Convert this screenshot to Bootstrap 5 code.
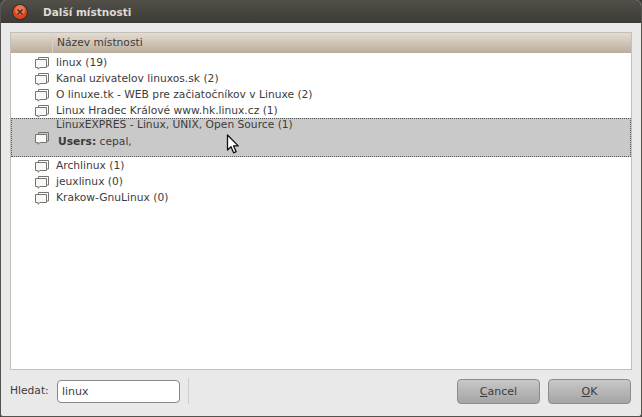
<!DOCTYPE html>
<html lang="cs">
<head>
  <meta charset="UTF-8">
  <title>Další místnosti</title>
  <link href="https://cdn.jsdelivr.net/npm/bootstrap@5.3.0/dist/css/bootstrap.min.css" rel="stylesheet">
  <style>
    html, body { height: 417px; overflow: hidden; background: #3c3b37; }
    body { font-family: "DejaVu Sans", sans-serif; font-size: 10.7px; color: #3c3c3c; line-height: 16px; }
    .dlg { width: 642px; height: 417px; position: relative; background: #e9e9e9; border-radius: 6px 6px 3px 3px; border: solid #55534d; border-width: 0 1px 1px 1px; overflow: hidden; }
    .titlebar { height: 23px; background: linear-gradient(#524f48, #3c3b37); color: #dfdbd2; font-weight: 700; font-size: 10.5px; margin: 0 -1px; padding-left: 12px; gap: 15px; }
    .panel { margin: 9px 9px 0 9px; height: 338px; background: #fff; border: 1px solid #c3c0ba; }
    .head-row { height: 20px; background: linear-gradient(#e4dcd0, #b9ac9b); color: #3c3c3c; }
    .head-blank { width: 42px; border-right: 1px solid #d6cec2; }
    .head-name { padding-left: 4px; }
    .room { height: 16px; padding: 1px 0 0 23px; gap: 6px; color: #3c3c3c; }
    .first { margin-top: 1px; }
    .room-sel { height: 39px; background: #c9c9c9; border: 1px dotted #555; padding-left: 22px; gap: 6px; }
    .room-text { align-self: flex-start; margin-top: -2px; }
    .users { margin: 1px 0 0 2px; }
    .chat { flex: 0 0 auto; }
    .foot { padding: 8px 10px 0 9px; }
    .foot-label { width: 47px; }
    .search { width: 123px; height: 23px; border: 1px solid #8a8780; border-radius: 4px; padding: 0 4px; font-size: 11px; color: #3c3c3c; background: #fff; font-family: inherit; outline: 0; }
    .sep { width: 1px; height: 26px; background: #cfcdc9; margin-left: 8px; }
    .gtk-btn { width: 83px; height: 25px; padding: 0; font-size: 11px; line-height: 1; color: #3c3c3c; border: 1px solid #8e8c87; border-radius: 4px; background: linear-gradient(#c8c8c8, #a4a4a4); font-family: inherit; }
    .pointer { position: absolute; left: 225px; top: 134px; }
  </style>
</head>
<body>
  <div class="dlg d-flex flex-column">
    <div class="titlebar d-flex align-items-center">
      <svg class="chat" width="16" height="16" viewBox="0 0 16 16"><circle cx="8" cy="8" r="7.5" fill="#d9481f" stroke="#2f2d29"/><circle cx="8" cy="6" r="5" fill="#f08a62" opacity=".7"/><path d="M5.500 5.500l5 5M10.500 5.500l-5 5" stroke="#4a2a20" stroke-width="1.4"/></svg>
      <span>Další místnosti</span>
    </div>

    <div class="panel">
      <div class="head-row d-flex align-items-center">
        <div class="head-blank h-100"></div>
        <div class="head-name">Název místnosti</div>
      </div>
      <div id="rows"></div>
    </div>

    <div class="foot d-flex align-items-center">
      <label class="foot-label" for="q">Hledat:</label>
      <input class="search" id="q" type="text" value="linux">
      <div class="sep"></div>
      <div class="d-flex gap-2 ms-auto">
        <button class="btn gtk-btn" type="button"><u>C</u>ancel</button>
        <button class="btn gtk-btn" type="button"><u>O</u>K</button>
      </div>
    </div>

    <svg class="pointer" width="14" height="21" viewBox="0 0 14 21"><path d="M1.500 1v15l3.500-3.200 2.600 6 2.600-1.100-2.600-5.800h4.600z" fill="#fff" stroke="#111" stroke-width="1.300" stroke-linejoin="round"/></svg>
  </div>

  <script src="https://cdn.jsdelivr.net/npm/bootstrap@5.3.0/dist/js/bootstrap.bundle.min.js"></script>
  <script>
    const chatIcon = `<svg class="chat" width="16" height="14" viewBox="0 0 16 14" fill="none" stroke="#77756f"><path d="M4.500 3V1.500h10V10h-1.500"/><path d="M1.500 3.500h11v8H6l-2 1.800v-1.800H1.500z" fill="#f8f8f6"/></svg>`;
    const before = ['linux (19)', 'Kanal uzivatelov linuxos.sk (2)', 'O linuxe.tk - WEB pre začiatočníkov v Linuxe (2)', 'Linux Hradec Králové www.hk.linux.cz (1)'];
    const after = ['Archlinux (1)', 'jeuxlinux (0)', 'Krakow-GnuLinux (0)'];
    const row = (t, i) => `<div class="room d-flex align-items-center${i === 0 ? ' first' : ''}">${chatIcon}<span>${t}</span></div>`;
    document.getElementById('rows').innerHTML =
      before.map(row).join('') +
      `<div class="room-sel d-flex align-items-center">${chatIcon}<div class="room-text"><div>LinuxEXPRES - Linux, UNIX, Open Source (1)</div><div class="users"><b>Users:</b> cepal,</div></div></div>` +
      after.map(t => row(t, 1)).join('');
  </script>
</body>
</html>
